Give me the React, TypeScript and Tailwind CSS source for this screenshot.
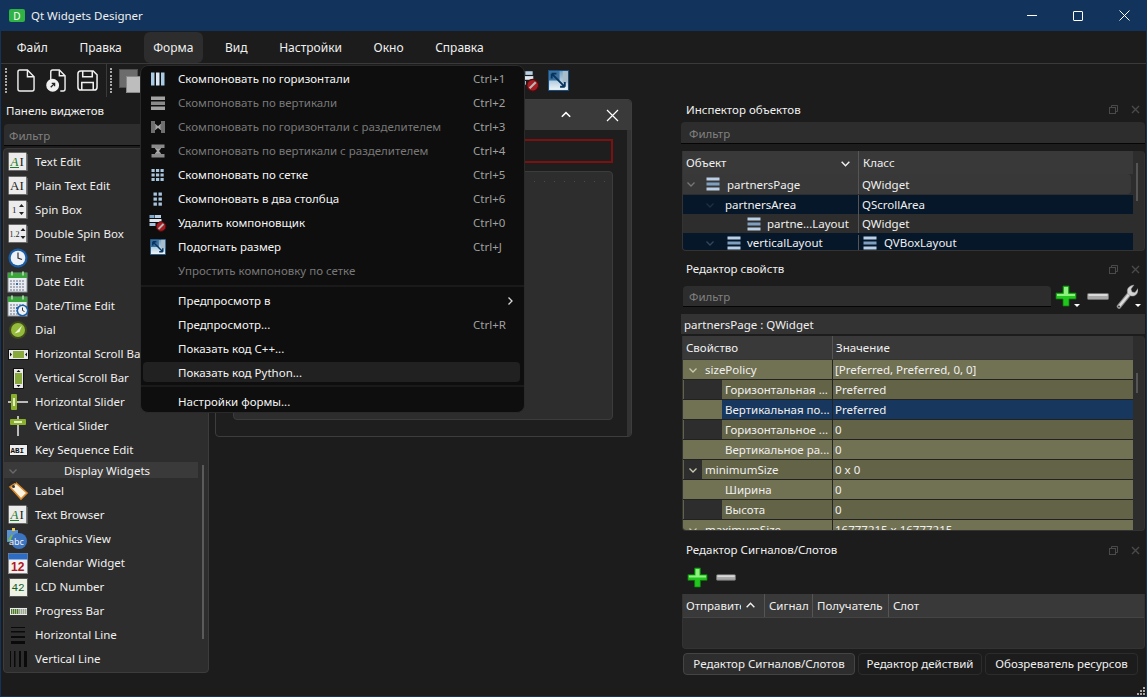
import React from "react";

const font = { fontFamily: '"Noto Sans", "Open Sans", sans-serif' };

function Box({ children }: { children?: React.ReactNode }) {
  return <svg width="24" height="24" viewBox="0 0 24 24">{children}</svg>;
}

function LayoutBars({ kind = "v" }: { kind?: string }) {
  if (kind === "h")
    return (
      <svg width="16" height="16" viewBox="0 0 16 16">
        <rect x="1" y="1.500" width="14" height="3.500" fill="#a2a2a2" />
        <rect x="1" y="6.500" width="14" height="3.500" fill="#8a8a8a" />
        <rect x="1" y="11.500" width="14" height="3.500" fill="#a2a2a2" />
      </svg>
    );
  return (
    <svg width="16" height="16" viewBox="0 0 16 16">
      <rect x="1" y="1.500" width="3.500" height="13" fill="#a9cbe6" />
      <rect x="6" y="1.500" width="3.500" height="13" fill="#dbe8f3" />
      <rect x="11" y="1.500" width="3.500" height="13" fill="#a9cbe6" />
    </svg>
  );
}

function VLayoutIcon() {
  return (
    <svg width="14" height="14" viewBox="0 0 14 14">
      <rect x="0.500" y="0.500" width="13" height="3" fill="#b9cfe6" />
      <rect x="0.500" y="5.500" width="13" height="3" fill="#7f9fc0" />
      <rect x="0.500" y="10.500" width="13" height="3" fill="#b9cfe6" />
    </svg>
  );
}

function MenuIcon({ name }: { name: string }) {
  switch (name) {
    case "hl":
      return <LayoutBars kind="v" />;
    case "vl":
      return <LayoutBars kind="h" />;
    case "hs":
      return (
        <svg width="16" height="16" viewBox="0 0 16 16">
          <rect x="1" y="2" width="4" height="12" fill="#6f6f6f" />
          <rect x="11" y="2" width="4" height="12" fill="#6f6f6f" />
          <path d="M5 8h6M5 5.500l3 2.500 3-2.500M5 10.500l3-2.500 3 2.500" stroke="#a8a8a8" strokeWidth="1.500" fill="none" />
        </svg>
      );
    case "vs":
      return (
        <svg width="16" height="16" viewBox="0 0 16 16">
          <rect x="1.500" y="1.500" width="13" height="3.500" fill="#8a8a8a" />
          <rect x="1.500" y="11" width="13" height="3.500" fill="#8a8a8a" />
          <path d="M8 5v6M5.500 5l2.500 3 2.500-3M5.500 11l2.500-3 2.500 3" stroke="#a8a8a8" strokeWidth="1.500" fill="none" />
        </svg>
      );
    case "grid":
      return (
        <svg width="16" height="16" viewBox="0 0 16 16" fill="#a9c4dd">
          {[2, 6.5, 11].flatMap((y) =>
            [1.5, 6, 10.5].map((x) => <rect key={`${x}-${y}`} x={x} y={y} width="3.2" height="3" />)
          )}
        </svg>
      );
    case "form":
      return (
        <svg width="16" height="16" viewBox="0 0 16 16" fill="#a9c4dd">
          {[1.5, 6.5, 11.5].flatMap((y) =>
            [3.5, 8.5].map((x) => <rect key={`${x}-${y}`} x={x} y={y} width="3.4" height="3.2" />)
          )}
        </svg>
      );
    case "break":
      return <BreakIcon size={18} />;
    case "adjust":
      return <AdjustIcon size={16} />;
    default:
      return null;
  }
}

function BreakIcon({ size }: { size: number }) {
  return (
    <svg width={size} height={size} viewBox="0 0 18 18">
      <rect x="0.500" y="1" width="5" height="3" fill="#7fa8cc" />
      <rect x="6" y="1" width="6" height="3" fill="#b7d0e6" />
      <rect x="0.500" y="5" width="12" height="3" fill="#dfe8f0" />
      <rect x="0.500" y="9" width="6" height="3" fill="#a9c4dd" />
      <circle cx="12" cy="12.500" r="4.800" fill="#a51c22" stroke="#4a0d10" />
      <path d="M9.500 15l5-5" stroke="#b9b9b9" strokeWidth="1.800" />
    </svg>
  );
}

function AdjustIcon({ size }: { size: number }) {
  return (
    <svg width={size} height={size} viewBox="0 0 20 20">
      <defs>
        <linearGradient id="adj" x1="0" y1="0" x2="0" y2="1">
          <stop offset="0" stopColor="#6f9ec2" />
          <stop offset="1" stopColor="#f2f8fb" />
        </linearGradient>
      </defs>
      <rect x="0.500" y="0.500" width="19" height="19" fill="url(#adj)" stroke="#174f80" />
      <rect x="1" y="1" width="10" height="9" fill="#3c6f9c" />
      <rect x="14" y="1" width="5" height="11" fill="#a9bcc9" />
      <path d="M3.500 3.500L16 16M3.500 3.500h4.500M3.500 3.500V8M16 16h-4.500M16 16v-4.500" stroke="#07345e" strokeWidth="1.800" fill="none" />
    </svg>
  );
}

function PaperBox({ children }: { children: React.ReactNode }) {
  return (
    <svg width="20" height="20" viewBox="0 0 20 20">
      <rect x="0.500" y="0.500" width="18" height="18" rx="1" fill="#ececec" stroke="#6a6a6a" />
      <rect x="18.500" y="2" width="1" height="17" fill="#888" />
      {children}
    </svg>
  );
}

function WidgetIcon({ name }: { name: string }) {
  const serif = "Liberation Serif, serif";
  switch (name) {
    case "text":
      return (
        <PaperBox>
          <text x="2.500" y="13.500" fontFamily={serif} fontStyle="italic" fontSize="13" fill="#1f7a28">A</text>
          <rect x="2" y="15" width="9" height="1" fill="#1f7a28" />
          <text x="11.500" y="13.500" fontFamily={serif} fontSize="13" fill="#222">I</text>
        </PaperBox>
      );
    case "plain":
      return (
        <PaperBox>
          <text x="2" y="14" fontFamily={serif} fontSize="13" fill="#222">A</text>
          <text x="11.500" y="14" fontFamily={serif} fontSize="13" fill="#222">I</text>
        </PaperBox>
      );
    case "spin":
      return (
        <PaperBox>
          <text x="4" y="13" fontFamily={serif} fontSize="9" fill="#222">1</text>
          <path d="M11 7l2.500-3 2.500 3zM11 12l2.500 3 2.500-3z" fill="#222" />
        </PaperBox>
      );
    case "dspin":
      return (
        <PaperBox>
          <text x="1.500" y="13" fontFamily={serif} fontSize="8" fill="#222">1.2</text>
          <path d="M12.500 7l2.500-3 2.500 3zM12.500 12l2.500 3 2.500-3z" fill="#222" />
        </PaperBox>
      );
    case "time":
      return (
        <svg width="20" height="20" viewBox="0 0 20 20">
          <circle cx="10" cy="10" r="9.500" fill="#1b5fa8" />
          <circle cx="10" cy="10" r="7.300" fill="#eef2f6" />
          <path d="M10 4.500V10l4 1.500" stroke="#333" strokeWidth="1.200" fill="none" />
        </svg>
      );
    case "date":
    case "datetime":
      return (
        <svg width="22" height="22" viewBox="0 0 22 22">
          <rect x="1" y="2" width="19" height="19" fill="#e8ecf2" stroke="#8a8f96" />
          <rect x="1" y="2" width="19" height="5" fill="#3aa53a" />
          <rect x="4" y="0.500" width="2" height="4" fill="#9ad29a" />
          <rect x="15" y="0.500" width="2" height="4" fill="#9ad29a" />
          {[9, 12, 15, 18].flatMap((y) =>
            [3, 6, 9, 12, 15].map((x) => (
              <rect key={`${x}-${y}`} x={x} y={y} width="2" height="2" fill={x === 9 && y === 12 ? "#3a6ab0" : "#a9aeb8"} />
            ))
          )}
          {name === "datetime" && (
            <g>
              <circle cx="15.500" cy="15.500" r="6" fill="#1b5fa8" />
              <circle cx="15.500" cy="15.500" r="4.400" fill="#eef2f6" />
              <path d="M15.500 12.500v3l2 1" stroke="#333" fill="none" />
            </g>
          )}
        </svg>
      );
    case "dial":
      return (
        <svg width="20" height="20" viewBox="0 0 20 20">
          <circle cx="10" cy="10" r="9" fill="#3f4a1e" />
          <circle cx="10" cy="10" r="7" fill="#94bc3a" />
          <path d="M6.500 13.500L14 5.500l-2.500 6.500z" fill="#f0f4dc" />
        </svg>
      );
    case "hscroll":
      return (
        <svg width="21" height="11" viewBox="0 0 21 11">
          <rect x="0.500" y="0.500" width="20" height="10" fill="#e8e8e8" stroke="#111" />
          <rect x="5" y="2" width="11" height="7" fill="#87a83a" />
          <path d="M4 5.500l-2-2v4zM17 5.500l2-2v4z" fill="#111" />
        </svg>
      );
    case "vscroll":
      return (
        <svg width="11" height="21" viewBox="0 0 11 21">
          <rect x="0.500" y="0.500" width="10" height="20" fill="#e8e8e8" stroke="#111" />
          <rect x="2" y="5" width="7" height="11" fill="#87a83a" />
          <path d="M5.500 2L3.500 4h4zM5.500 19l-2-2h4z" fill="#111" />
        </svg>
      );
    case "hslider":
      return (
        <svg width="20" height="20" viewBox="0 0 20 20">
          <rect x="0" y="9" width="20" height="2" fill="#bbb" />
          <rect x="3" y="2" width="6" height="16" rx="1" fill="#8aaf2f" />
          <rect x="5" y="6" width="2" height="8" fill="#e4eec4" />
        </svg>
      );
    case "vslider":
      return (
        <svg width="20" height="20" viewBox="0 0 20 20">
          <rect x="9" y="0" width="2" height="20" fill="#bbb" />
          <rect x="2" y="3" width="16" height="6" rx="1" fill="#8aaf2f" />
          <rect x="6" y="5" width="8" height="2" fill="#e4eec4" />
        </svg>
      );
    case "key":
      return (
        <svg width="19" height="12" viewBox="0 0 19 12">
          <rect x="0.500" y="0.500" width="18" height="11" fill="#eee" stroke="#222" />
          <text x="1.500" y="9" fontFamily="Liberation Mono, monospace" fontWeight="bold" fontSize="7.500" fill="#111">ABI</text>
        </svg>
      );
    case "label":
      return (
        <svg width="22" height="20" viewBox="0 0 22 20">
          <path d="M3 6l6-4 11 10-6 6z" fill="#fbf3e2" stroke="#d88a2c" strokeWidth="1.600" />
          <circle cx="6.500" cy="5.500" r="1.500" fill="#333" />
          <path d="M2 5C2 1 6 0 9 2" stroke="#222" fill="none" />
        </svg>
      );
    case "gview":
      return (
        <svg width="24" height="24" viewBox="0 0 24 24">
          <rect x="1" y="3" width="11" height="12" fill="#5a8fd0" />
          <path d="M2 13l4-6 3 4 2-2v5H2z" fill="#7ab648" />
          <rect x="6" y="1" width="3" height="3" fill="#e8c84a" />
          <circle cx="13" cy="14" r="8" fill="#3d74c0" />
          <text x="3" y="18" fontFamily="Noto Sans, sans-serif" fontSize="9" fill="#f0f0f0">abc</text>
        </svg>
      );
    case "calendar":
      return (
        <svg width="20" height="21" viewBox="0 0 20 21">
          <rect x="0.500" y="0.500" width="19" height="20" fill="#f2f2f2" stroke="#8a8a8a" />
          <rect x="0.500" y="0.500" width="19" height="6" fill="#2d6cc4" />
          <text x="3" y="18" fontFamily="Liberation Sans, sans-serif" fontWeight="bold" fontSize="12" fill="#b3161c">12</text>
        </svg>
      );
    case "lcd":
      return (
        <svg width="19" height="19" viewBox="0 0 19 19">
          <rect x="0.500" y="0.500" width="18" height="18" fill="#eef2e4" stroke="#555" />
          <text x="2.500" y="13" fontFamily="Liberation Mono, monospace" fontSize="11" fill="#115c2a">42</text>
        </svg>
      );
    case "progress":
      return (
        <svg width="19" height="9" viewBox="0 0 19 9">
          <rect x="0.500" y="0.500" width="18" height="8" fill="#ececec" stroke="#333" />
          {[2, 4, 6, 8].map((x) => <rect key={x} x={x} y="2" width="1.400" height="5" fill="#4d7a28" />)}
          {[10, 12, 14, 16].map((x) => <rect key={x} x={x} y="2" width="1.400" height="5" fill="#9aa690" />)}
        </svg>
      );
    case "hline":
      return (
        <svg width="15" height="17" viewBox="0 0 15 17" fill="#0a0a0a">
          <rect y="0" width="14" height="1" />
          <rect y="4" width="14" height="1.500" />
          <rect y="9" width="14" height="2" />
          <rect y="14" width="14" height="3" />
        </svg>
      );
    case "vline":
      return (
        <svg width="17" height="16" viewBox="0 0 17 16" fill="#0a0a0a">
          <rect x="0" width="1" height="16" />
          <rect x="4" width="1.500" height="16" />
          <rect x="9" width="2" height="16" />
          <rect x="14" width="3" height="16" />
        </svg>
      );
    default:
      return <Box />;
  }
}

const widgetsTop = [
  ["text", "Text Edit"],
  ["plain", "Plain Text Edit"],
  ["spin", "Spin Box"],
  ["dspin", "Double Spin Box"],
  ["time", "Time Edit"],
  ["date", "Date Edit"],
  ["datetime", "Date/Time Edit"],
  ["dial", "Dial"],
  ["hscroll", "Horizontal Scroll Bar"],
  ["vscroll", "Vertical Scroll Bar"],
  ["hslider", "Horizontal Slider"],
  ["vslider", "Vertical Slider"],
  ["key", "Key Sequence Edit"],
];
const widgetsBottom = [
  ["label", "Label"],
  ["text", "Text Browser"],
  ["gview", "Graphics View"],
  ["calendar", "Calendar Widget"],
  ["lcd", "LCD Number"],
  ["progress", "Progress Bar"],
  ["hline", "Horizontal Line"],
  ["vline", "Vertical Line"],
];

function WidgetRow({ icon, label }: { icon: string; label: string }) {
  return (
    <div className="flex h-6 items-center">
      <div className="flex w-[31px] shrink-0 items-center justify-center pr-[3px]">
        <WidgetIcon name={icon} />
      </div>
      <span className="whitespace-nowrap text-[#f0f0f0]">{label}</span>
    </div>
  );
}

function Chevron({ dir = "down", color = "#777", size = 10 }: { dir?: string; color?: string; size?: number }) {
  const d =
    dir === "down" ? "M1.5 3.5L5 7l3.5-3.5" : dir === "up" ? "M1.5 6.5L5 3l3.5 3.5" : "M3.5 1.5L7 5 3.5 8.5";
  return (
    <svg width={size} height={size} viewBox="0 0 10 10" className="shrink-0">
      <path d={d} stroke={color} strokeWidth="1.300" fill="none" />
    </svg>
  );
}

function DockTitle({ title }: { title: string }) {
  return (
    <div className="flex h-[18px] items-center justify-between pl-[5px] pr-[5px] text-[#f0f0f0]">
      <span>{title}</span>
      <div className="flex items-center gap-[13px]">
        <svg width="9" height="9" viewBox="0 0 9 9" fill="none" stroke="#4a4a4a">
          <rect x="0.500" y="2.500" width="6" height="6" />
          <path d="M2.500 2.500v-2h6v6h-2" />
        </svg>
        <svg width="9" height="9" viewBox="0 0 9 9" stroke="#4a4a4a" strokeWidth="1.400">
          <path d="M1 1l7 7M8 1L1 8" />
        </svg>
      </div>
    </div>
  );
}

function Filter({ className }: { className: string }) {
  return (
    <div className={`flex items-center rounded-t border-b border-b-[#050505] bg-[#2d2d2d] text-[#808080] ${className}`}>
      Фильтр
    </div>
  );
}

function Plus({ size }: { size: number }) {
  return (
    <svg width={size} height={size} viewBox="0 0 22 22">
      <path d="M8 1h6v7h7v6h-7v7H8v-7H1V8h7z" fill="#22c71e" stroke="#0c7a0c" strokeWidth="0.800" />
      <path d="M9 2h4v7h7v2H9zM2 9h7v2H2z" fill="#8df07f" />
    </svg>
  );
}

function Minus({ w }: { w: number }) {
  return (
    <svg width={w} height="7" viewBox="0 0 22 7">
      <rect x="0.500" y="0.500" width="21" height="6" rx="1" fill="#a8a8a8" stroke="#6f6f6f" />
      <rect x="1.500" y="1" width="19" height="2" fill="#d9d9d9" />
    </svg>
  );
}

function Wrench() {
  return (
    <svg width="22" height="25" viewBox="0 0 22 25">
      <path d="M3 22.500L14 9" stroke="#8c8c8c" strokeWidth="4.500" strokeLinecap="round" />
      <path d="M3 22.500L14 9" stroke="#dcdcdc" strokeWidth="2.400" strokeLinecap="round" />
      <circle cx="3" cy="22.500" r="1" fill="#333" />
      <path d="M12 10c-2-4 0-8 6-9l-3 4 1 3 3 .500 3-4c.500 6-4 9-8 7z" fill="#d4d4d4" stroke="#8c8c8c" strokeWidth="0.500" />
    </svg>
  );
}

function Caret() {
  return <span className="mt-auto ml-[-3px] mb-[1px] h-0 w-0 border-x-[3px] border-t-[3px] border-x-transparent border-t-white" />;
}

const propRows: {
  name: string;
  value: string;
  indent?: boolean;
  tone: string;
  gutter?: string;
  top?: boolean;
  selected?: boolean;
}[] = [
  { name: "sizePolicy", value: "[Preferred, Preferred, 0, 0]", tone: "bg-[#717153]", top: true },
  { name: "Горизонтальная ...", value: "Preferred", indent: true, tone: "bg-[#636347]", gutter: "bg-[#2d2d2d]" },
  { name: "Вертикальная по...", value: "Preferred", indent: true, tone: "bg-[#17375f]", gutter: "bg-[#717153]", selected: true },
  { name: "Горизонтальное ...", value: "0", indent: true, tone: "bg-[#636347]", gutter: "bg-[#2d2d2d]" },
  { name: "Вертикальное ра...", value: "0", indent: true, tone: "bg-[#717153]" },
  { name: "minimumSize", value: "0 x 0", tone: "bg-[#636347]", top: true, gutter: "bg-[#2d2d2d]" },
  { name: "Ширина", value: "0", indent: true, tone: "bg-[#717153]" },
  { name: "Высота", value: "0", indent: true, tone: "bg-[#636347]", gutter: "bg-[#2d2d2d]" },
  { name: "maximumSize", value: "16777215 x 16777215", tone: "bg-[#717153]", top: true },
];

function PropRow({ row }: { row: (typeof propRows)[number] }) {
  return (
    <div className={`flex h-5 shrink-0 border-b border-[#222] text-[#f0f0f0] ${row.selected ? "bg-[#717153]" : row.tone}`}>
      <div className="flex w-[150px] shrink-0 border-r border-[#222] pl-[1px]">
        {row.top ? (
          <div className="flex h-full w-full items-center">
            <div className={`flex h-full w-[18px] items-center justify-center ${row.gutter ?? ""}`}>
              <Chevron color="#c9c9b0" />
            </div>
            <span className="pt-[1px] pl-[3px]">{row.name}</span>
          </div>
        ) : (
          <div className="flex h-full w-full items-center">
            <div className={`h-full w-[38px] shrink-0 ${row.gutter ?? ""}`} />
            <span className={`flex h-full flex-1 items-center whitespace-nowrap pt-[1px] pl-[3px] ${row.selected ? "bg-[#17375f]" : ""}`}>
              {row.name}
            </span>
          </div>
        )}
      </div>
      <div className={`flex flex-1 items-center pt-[1px] pl-[2px] ${row.selected ? "bg-[#17375f]" : ""}`}>{row.value}</div>
    </div>
  );
}

const menuTop: [string, string, string, boolean][] = [
  ["hl", "Скомпоновать по горизонтали", "Ctrl+1", true],
  ["vl", "Скомпоновать по вертикали", "Ctrl+2", false],
  ["hs", "Скомпоновать по горизонтали с разделителем", "Ctrl+3", false],
  ["vs", "Скомпоновать по вертикали с разделителем", "Ctrl+4", false],
  ["grid", "Скомпоновать по сетке", "Ctrl+5", true],
  ["form", "Скомпоновать в два столбца", "Ctrl+6", true],
  ["break", "Удалить компоновщик", "Ctrl+0", true],
  ["adjust", "Подогнать размер", "Ctrl+J", true],
  ["", "Упростить компоновку по сетке", "", false],
];

function MenuRow({ icon, label, shortcut, enabled = true, arrow, className = "h-6" }: { icon?: string; label: string; shortcut?: string; enabled?: boolean; arrow?: boolean; className?: string }) {
  return (
    <div className={`ml-[2px] mr-[4px] flex items-center rounded ${className}`}>
      <div className="flex w-[34px] shrink-0 items-center justify-center pr-[5px]">{icon ? <MenuIcon name={icon} /> : null}</div>
      <span className={`ml-[1px] flex-1 whitespace-nowrap ${enabled ? "text-[#f4f4f4]" : "text-[#787878]"}`}>{label}</span>
      {shortcut ? <span className="w-[47px] text-[#a0a0a0]">{shortcut}</span> : null}
      {arrow ? <span className="mr-[5px]"><Chevron dir="right" color="#d8d8d8" /></span> : null}
    </div>
  );
}

function Handle() {
  return (
    <div className="flex h-[25px] w-[2px] flex-col justify-between">
      {Array.from({ length: 8 }).map((_, i) => (
        <span key={i} className="h-[2px] w-[2px] bg-[#a8a8a8]" />
      ))}
    </div>
  );
}

export default function App() {
  return (
    <div className="relative flex h-[697px] w-[1147px] flex-col overflow-hidden border-x border-b border-[#12335b] bg-[#1c1c1c] text-[11.5px] leading-none" style={font}>
      {/* Title bar */}
      <div className="mx-[-1px] flex h-[31px] shrink-0 items-center bg-[#12335b] pl-[9px] text-[#f0f0f0]">
        <span className="flex h-[13px] w-[16px] items-center justify-center rounded-[2px] bg-[#2fb344] text-[10px] text-white">D</span>
        <span className="ml-[6px] text-[11.5px]">Qt Widgets Designer</span>
        <div className="ml-auto flex h-full items-center">
          <span className="flex w-[46px] justify-center">
            <span className="h-px w-[10px] bg-white" />
          </span>
          <span className="flex w-[46px] justify-center">
            <span className="h-[10px] w-[10px] rounded-[1px] border border-white" />
          </span>
          <span className="flex w-[46px] justify-center">
            <svg width="11" height="11" viewBox="0 0 11 11" stroke="#fff">
              <path d="M.5.5l10 10M10.500.5l-10 10" />
            </svg>
          </span>
        </div>
      </div>

      {/* Menu bar */}
      <div className="flex h-[33px] shrink-0 items-center border-b border-[#3a3a3a] text-[12px] text-[#f0f0f0]">
        {["Файл", "Правка", "Форма", "Вид", "Настройки", "Окно", "Справка"].map((m) => (
          <span
            key={m}
            className={`mx-[6px] my-[1px] flex h-[31px] items-center rounded-md px-[9.8px] pt-[1px] ${m === "Форма" ? "bg-[#2d2d2d]" : ""}`}
          >
            {m}
          </span>
        ))}
      </div>

      {/* Toolbar */}
      <div className="flex h-[33px] shrink-0 items-center pl-[4px]">
        <Handle />
        <div className="ml-[10px] flex items-center gap-[11px]">
          <svg width="18" height="23" viewBox="0 0 19 24" fill="none" stroke="#f0f0f0" strokeWidth="1.500">
            <path d="M1 3a2 2 0 012-2h8l7 7v13a2 2 0 01-2 2H3a2 2 0 01-2-2z" />
            <path d="M11 1v7h7" />
          </svg>
          <svg width="20" height="23" viewBox="0 0 21 24" fill="none" stroke="#f0f0f0" strokeWidth="1.500">
            <path d="M5 12V3a2 2 0 012-2h7l6 6v14a2 2 0 01-2 2h-3" />
            <path d="M14 1v6h6" />
            <circle cx="7" cy="17" r="6" fill="#f0f0f0" />
            <path d="M5 19l4-4M6 15h3v3" stroke="#222" strokeWidth="1.400" />
          </svg>
          <svg width="21" height="21" viewBox="0 0 22 22" fill="none" stroke="#f0f0f0" strokeWidth="1.600">
            <path d="M1 4a3 3 0 013-3h13l4 4v13a3 3 0 01-3 3H4a3 3 0 01-3-3z" />
            <path d="M6 1v6h10V1M5 21v-8h12v8" />
          </svg>
        </div>
        <span className="ml-[8px] h-[33px] w-px bg-[#3a3a3a]" />
        <span className="ml-[3px]"><Handle /></span>
        <svg className="ml-[7px]" width="24" height="24" viewBox="0 0 24 24">
          <rect x="0.500" y="0.500" width="18" height="18" fill="#6c6c6c" stroke="#4f4f4f" />
          <rect x="7.500" y="7.500" width="16" height="16" fill="#bdbdbd" stroke="#8a8a8a" />
        </svg>
        <span className="ml-[375px] flex"><BreakIcon size={22} /></span>
        <span className="ml-[8px] flex"><AdjustIcon size={21} /></span>
      </div>

      {/* Main area */}
      <div className="flex min-h-0 flex-1">
        {/* Widget box */}
        <div className="flex w-[208px] shrink-0 flex-col pb-[23px]">
          <div className="flex h-[27px] items-center pl-[5px] text-[#f0f0f0]">Панель виджетов</div>
          <Filter className="ml-[3px] h-[22px] w-[205px] pt-[2px] pl-[5px]" />
          <div className="relative mt-[2px] ml-[2px] flex min-h-0 flex-1 flex-col overflow-hidden rounded border border-[#3c3c3c] bg-[#2d2d2d]">
            <div className="flex flex-col pt-[1px]">
              {widgetsTop.map(([i, l]) => <WidgetRow key={l} icon={i} label={l} />)}
            </div>
            <div className="relative flex h-4 w-[194px] shrink-0 items-center justify-center bg-[#3a3a3a] pt-[1px] pl-[12px] text-[#f0f0f0]">
              <span className="absolute left-[4px]"><Chevron color="#6a6a6a" /></span>
              Display Widgets
            </div>
            <div className="flex flex-col pt-[1px]">
              {widgetsBottom.map(([i, l]) => <WidgetRow key={l} icon={i} label={l} />)}
            </div>
            <span className="absolute top-[316px] right-[4px] h-[174px] w-[2px] bg-[#5a5a5a]" />
          </div>
        </div>

        {/* Central canvas */}
        <div className="min-w-0 flex-1 pt-[2px] pl-[6px]">
          <div className="flex h-[338px] w-[417px] flex-col overflow-hidden rounded border border-[#3d3d3d] bg-[#1e1e1e]">
            <div className="flex h-[30px] shrink-0 items-center justify-end gap-[34px] bg-[#3a3a3a] pr-[12px]">
              <Chevron dir="up" color="#fff" size={12} />
              <svg width="13" height="13" viewBox="0 0 13 13" stroke="#fff" strokeWidth="1.200">
                <path d="M1 1l11 11M12 1L1 12" />
              </svg>
            </div>
            <div className="flex min-h-0 flex-1 border-r-4 border-[#333]">
              <div className="flex flex-1 flex-col pt-[9px] pr-[14px] pb-[16px] pl-[17px]">
                <div className="h-[24px] shrink-0 border-2 border-[#7d1010]" />
                <div className="mt-[8px] flex-1 rounded border border-[#3c3c3c] bg-[#2d2d2d] pt-[9px]">
                  <div className="h-px bg-[repeating-linear-gradient(90deg,#4a4a4a_0_1px,transparent_1px_10px)]" />
                </div>
              </div>
            </div>
          </div>
        </div>

        {/* Right docks */}
        <div className="flex w-[465px] shrink-0 flex-col pr-[1px]">
          <div className="flex h-[25px] shrink-0 items-center"><div className="w-full"><DockTitle title="Инспектор объектов" /></div></div>
          <Filter className="h-[22px] shrink-0 pt-[2px] pl-[8px]" />
          <div className="relative mt-[7px] ml-[1px] flex h-[100px] shrink-0 flex-col overflow-hidden rounded-tr rounded-b border-x border-b border-[#333] bg-[#2d2d2d] text-[#f0f0f0]">
            <div className="mr-[11px] flex h-[23px] shrink-0 bg-[#393939]">
              <div className="flex w-[176px] items-center justify-between border-r border-[#555] pt-[1px] pl-[3px] pr-[7px]">Объект <Chevron color="#f0f0f0" size={11} /></div>
              <div className="flex items-center pt-[1px] pl-[4px]">Класс</div>
            </div>
            <div className="mr-[13px] flex h-[20px] shrink-0 items-center rounded-r bg-[#383838]">
              <div className="flex h-full w-[176px] items-center border-r border-[#555] pl-[3px]"><Chevron /><span className="ml-[10px] flex"><VLayoutIcon /></span><span className="ml-[7px] pt-[1px]">partnersPage</span></div>
              <div className="pt-[1px] pl-[3px]">QWidget</div>
            </div>
            <div className="mr-[11px] mt-[1px] flex h-[19px] shrink-0 items-center bg-[#07172a]">
              <div className="flex h-full w-[176px] items-center border-r border-[#555] pl-[22px]"><Chevron color="#1f3044" /><span className="ml-[10px]">partnersArea</span></div>
              <div className="pl-[3px]">QScrollArea</div>
            </div>
            <div className="flex h-[19px] shrink-0 items-center">
              <div className="flex h-full w-[176px] items-center border-r border-[#555] pl-[64px]"><VLayoutIcon /><span className="ml-[6px] whitespace-nowrap">partne...Layout</span></div>
              <div className="pl-[3px]">QWidget</div>
            </div>
            <div className="mr-[11px] flex h-[18px] shrink-0 items-center bg-[#07172a] pt-[2px]">
              <div className="flex h-full w-[176px] items-center border-r border-[#555] pl-[22px]"><Chevron color="#33475c" /><span className="ml-[12px] flex"><VLayoutIcon /></span><span className="ml-[6px]">verticalLayout</span></div>
              <div className="flex items-center pl-[4px]"><VLayoutIcon /><span className="ml-[7px]">QVBoxLayout</span></div>
            </div>
            <span className="absolute top-[12px] right-[6px] h-[38px] w-[2px] bg-[#555]" />
          </div>

          <div className="mt-[9px] shrink-0"><DockTitle title="Редактор свойств" /></div>
          <div className="mt-[5px] flex h-[26px] shrink-0 items-center">
            <Filter className="ml-[2px] h-[21px] w-[368px] shrink-0 pt-[3px] pl-[6px]" />
            <span className="ml-[4px] flex h-6 items-center"><Plus size={22} /><Caret /></span>
            <span className="ml-[7px] flex"><Minus w={22} /></span>
            <span className="ml-[7px] flex h-6 items-center"><Wrench /><Caret /></span>
          </div>
          <div className="mt-[5px] flex h-[20px] shrink-0 items-center bg-[#333] pt-[1px] pl-[3px] text-[#f0f0f0]">partnersPage : QWidget</div>
          <div className="relative mt-[2px] ml-[1px] flex h-[195px] shrink-0 flex-col overflow-hidden rounded-tr rounded-b border-x border-b border-[#333] bg-[#2d2d2d]">
            <div className="mr-[11px] flex h-[24px] shrink-0 border-b border-[#333] bg-[#393939] text-[#f0f0f0]">
              <div className="flex w-[150px] items-center border-r border-[#555] pt-[1px] pl-[3px]">Свойство</div>
              <div className="flex items-center pt-[1px] pl-[3px]">Значение</div>
            </div>
            <div className="mr-[11px] flex flex-col">
              {propRows.map((r) => <PropRow key={r.name} row={r} />)}
            </div>
            <span className="absolute top-[37px] right-[6px] h-[20px] w-[2px] bg-[#555]" />
          </div>

          <div className="mt-[10px] shrink-0"><DockTitle title="Редактор Сигналов/Слотов" /></div>
          <div className="mt-[5px] flex h-[26px] shrink-0 items-center gap-[8px] pl-[6px]">
            <Plus size={21} />
            <Minus w={20} />
          </div>
          <div className="mt-[4px] ml-[1px] flex h-[55px] shrink-0 flex-col overflow-hidden rounded-b border-x border-b border-[#333] bg-[#2d2d2d] text-[#f0f0f0]">
            <div className="flex h-6 shrink-0 border-b border-[#444] bg-[#393939]">
              <div className="flex w-[82px] items-center overflow-hidden border-r border-[#555] pl-[3px]"><span className="w-[55px] overflow-hidden whitespace-nowrap pt-[1px]">Отправитель</span><span className="ml-[4px] flex"><Chevron dir="up" color="#f0f0f0" size={11} /></span></div>
              <div className="flex w-[48px] items-center border-r border-[#555] pt-[1px] pl-[4px]">Сигнал</div>
              <div className="flex w-[76px] items-center border-r border-[#555] pt-[1px] pl-[4px]">Получатель</div>
              <div className="flex items-center pt-[1px] pl-[4px]">Слот</div>
            </div>
          </div>
          <div className="mt-[4px] ml-[2px] flex h-[22px] shrink-0 gap-[3px] text-[#f0f0f0]">
            <span className="flex w-[172px] items-center justify-center rounded border border-[#444] bg-[#2d2d2d]">Редактор Сигналов/Слотов</span>
            <span className="flex w-[124px] items-center justify-center rounded border border-[#2c2c2c]">Редактор действий</span>
            <span className="flex w-[153px] items-center justify-center rounded border border-[#2c2c2c]">Обозреватель ресурсов</span>
          </div>
        </div>
      </div>

      {/* Size grip */}
      <svg className="absolute right-[1px] bottom-[1px]" width="8" height="8" viewBox="0 0 8 8" fill="#a8a8a8">
        <rect x="6" y="0" width="2" height="2" />
        <rect x="3" y="3" width="2" height="2" />
        <rect x="6" y="3" width="2" height="2" />
        <rect x="0" y="6" width="2" height="2" />
        <rect x="3" y="6" width="2" height="2" />
        <rect x="6" y="6" width="2" height="2" />
      </svg>

      {/* Form menu (popup) */}
      <div className="absolute top-[65px] left-[139px] w-[385px] rounded-lg border border-[#2a2a2a] bg-[#0e0e0e] pt-[1px]">
        {menuTop.map(([i, l, s, e]) => (
          <MenuRow key={l} icon={i} label={l} shortcut={s} enabled={e} />
        ))}
        <div className="my-[2px] h-[2px] bg-[#1a1a1a]" />
        <MenuRow label="Предпросмотр в" arrow />
        <MenuRow label="Предпросмотр..." shortcut="Ctrl+R" />
        <MenuRow label="Показать код C++..." />
        <MenuRow label="Показать код Python..." className="mt-[1px] mb-[3px] h-5 bg-[#212121] pt-[1px]" />
        <div className="my-[2px] h-[2px] bg-[#1a1a1a]" />
        <MenuRow label="Настройки формы..." className="h-[23px] pt-[2px]" />
      </div>
    </div>
  );
}
